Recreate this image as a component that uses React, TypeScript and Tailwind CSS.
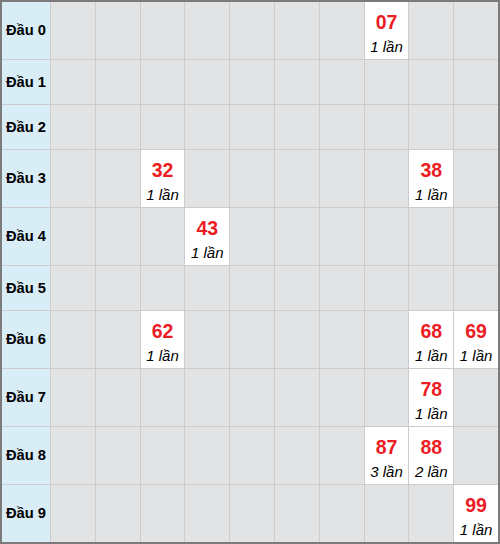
import React from 'react';

type Hit = { n: string; c: number };

// mỗi hàng: các số về theo đầu, cột theo đuôi
const rows: Hit[][] = [
  [{ n: '07', c: 1 }],
  [],
  [],
  [{ n: '32', c: 1 }, { n: '38', c: 1 }],
  [{ n: '43', c: 1 }],
  [],
  [{ n: '62', c: 1 }, { n: '68', c: 1 }, { n: '69', c: 1 }],
  [{ n: '78', c: 1 }],
  [{ n: '87', c: 3 }, { n: '88', c: 2 }],
  [{ n: '99', c: 1 }],
];

const App: React.FC = () => {
  return (
    <div className="w-[500px] h-[544px] border-2 border-[#7b7b7b] bg-[#cccccc] font-['Liberation_Sans',Arial,sans-serif]">
      <div className="grid grid-cols-[48px_repeat(10,1fr)] gap-px">
        {rows.map((hits, i) => {
          const tall = hits.length > 0;
          return (
            <React.Fragment key={i}>
              <div
                className={`bg-[#d9edf7] flex items-center pl-[4px] text-[14.7px] font-bold text-black ${
                  tall ? 'h-[57px]' : 'h-[44px]'
                }`}
              >
                Đầu {i}
              </div>
              {Array.from({ length: 10 }).map((_, j) => {
                const hit = hits.find((h) => Number(h.n[1]) === j);
                return hit ? (
                  <div key={j} className="bg-white flex flex-col items-center pt-[8px]">
                    <div className="text-[19.5px] leading-[24px] font-bold text-[#ec1c24]">{hit.n}</div>
                    <div className="mt-[3px] text-[15px] leading-[20px] italic text-black">{hit.c} lần</div>
                  </div>
                ) : (
                  <div key={j} className="bg-[#e2e3e5]" />
                );
              })}
            </React.Fragment>
          );
        })}
      </div>
    </div>
  );
};

export default App;
